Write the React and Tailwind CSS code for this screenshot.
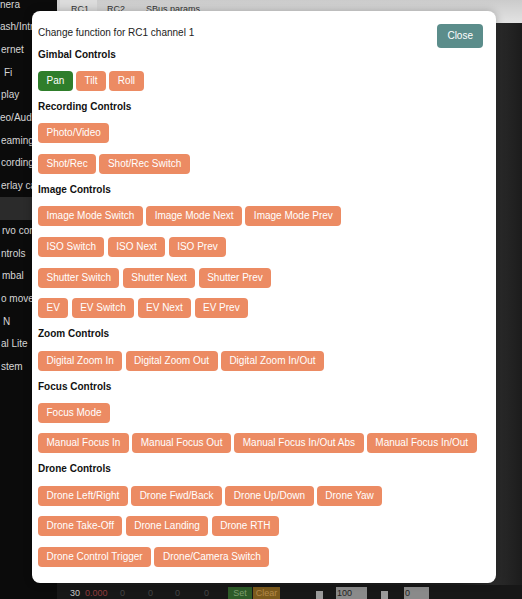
import React from "react";

const sideItems = [
  { label: "nera", pl: "pl-[0px]" },
  { label: "ash/Intro", pl: "pl-[0px]" },
  { label: "ernet", pl: "pl-[1px]" },
  { label: "Fi", pl: "pl-[4px]" },
  { label: "play", pl: "pl-[1px]" },
  { label: "eo/Audio", pl: "pl-[0px]" },
  { label: "eaming", pl: "pl-[1px]" },
  { label: "cording", pl: "pl-[1px]" },
  { label: "erlay ca", pl: "pl-[1px]" },
  { label: "", pl: "pl-[0px]", active: true },
  { label: "rvo contr", pl: "pl-[2px]" },
  { label: "ntrols", pl: "pl-[1px]" },
  { label: "mbal", pl: "pl-[2px]" },
  { label: "o mover", pl: "pl-[1px]" },
  { label: "N", pl: "pl-[3px]" },
  { label: "al Lite", pl: "pl-[1px]" },
  { label: "stem", pl: "pl-[1px]" },
];

// function groups shown in the modal, one inner array per row
const sections = [
  { title: "Gimbal Controls", groups: [["Pan", "Tilt", "Roll"]] },
  {
    title: "Recording Controls",
    groups: [["Photo/Video"], ["Shot/Rec", "Shot/Rec Switch"]],
  },
  {
    title: "Image Controls",
    groups: [
      ["Image Mode Switch", "Image Mode Next", "Image Mode Prev"],
      ["ISO Switch", "ISO Next", "ISO Prev"],
      ["Shutter Switch", "Shutter Next", "Shutter Prev"],
      ["EV", "EV Switch", "EV Next", "EV Prev"],
    ],
  },
  {
    title: "Zoom Controls",
    groups: [["Digital Zoom In", "Digital Zoom Out", "Digital Zoom In/Out"]],
  },
  {
    title: "Focus Controls",
    groups: [
      ["Focus Mode"],
      [
        "Manual Focus In",
        "Manual Focus Out",
        "Manual Focus In/Out Abs",
        "Manual Focus In/Out",
      ],
    ],
  },
  {
    title: "Drone Controls",
    groups: [
      ["Drone Left/Right", "Drone Fwd/Back", "Drone Up/Down", "Drone Yaw"],
      ["Drone Take-Off", "Drone Landing", "Drone RTH"],
      ["Drone Control Trigger", "Drone/Camera Switch"],
    ],
  },
];

const selected = "Pan";

function FnButton({ label }) {
  const active = label === selected;
  return (
    <button
      className={
        "h-[20px] px-[8.5px] rounded-[4px] text-[10px] leading-[20px] text-white whitespace-nowrap " +
        (active ? "bg-[#2f7e2b]" : "bg-[#ec8b63]")
      }
    >
      {label}
    </button>
  );
}

export default function App() {
  return (
    <div
      className="relative flex w-[522px] h-[599px] overflow-hidden bg-black"
      style={{ fontFamily: '"Liberation Sans", Arial, sans-serif' }}
    >
      {/* Sidebar */}
      <div className="w-[57px] shrink-0 bg-[#0b0b0b] overflow-hidden">
        <div className="mt-[-6.3px] flex flex-col">
          {sideItems.map((item, i) => (
            <div
              key={i}
              className={
                "h-[22.65px] leading-[22.65px] text-[10px] text-[#d6d6d6] whitespace-nowrap " +
                item.pl +
                (item.active ? " bg-[#2b2b2b]" : "")
              }
            >
              {item.label}
            </div>
          ))}
        </div>
      </div>

      {/* Main */}
      <div className="flex-1 flex flex-col bg-[linear-gradient(to_right,#1b1b1b_0%,#1d1d1d_86%,#2c2c2c_94%,#1c1c1c_100%)]">
        <div className="h-[23px] flex items-start bg-[linear-gradient(to_bottom,#cbcbcb,#e3e3e3)] text-[9px] text-[#333]">
          <div className="ml-[3px] w-[37px] h-[23px] bg-[#dcdcdc] pl-[11px] pt-[3px]">RC1</div>
          <div className="ml-[10px] pt-[3px]">RC2</div>
          <div className="ml-[21px] pt-[3px]">SBus params</div>
        </div>

        <div className="mt-auto h-[14px] flex items-start bg-[#171717] text-[9px] leading-[12px]">
          <div className="w-[13px]" />
          <div className="w-[15px] pt-[2px] text-[#c8c8c8]">30</div>
          <div className="w-[35px] pt-[2px] text-[#8f3b3b]">0.000</div>
          <div className="w-[28px] pt-[2px] text-[#444]">0</div>
          <div className="w-[27px] pt-[2px] text-[#444]">0</div>
          <div className="w-[29px] pt-[2px] text-[#444]">0</div>
          <div className="w-[24px] pt-[2px] text-[#444]">0</div>
          <div className="w-[24px] h-[14px] mt-[2px] bg-[#2e5b28] text-[#7d9e6f] text-center">Set</div>
          <div className="ml-[1px] w-[27px] h-[14px] mt-[2px] bg-[#7b5a1c] text-[#b3894a] text-center">Clear</div>
          <div className="ml-[36px] mt-[6px] w-[7px] h-[8px] bg-[#9a9a9a]" />
          <div className="ml-[13px] mt-[2px] w-[31px] h-[14px] bg-[#8a8a8a] text-[#222] pl-[1px]">100</div>
          <div className="ml-[14px] mt-[6px] w-[7px] h-[8px] bg-[#9a9a9a]" />
          <div className="ml-[16px] mt-[2px] w-[25px] h-[14px] bg-[#8a8a8a] text-[#222] pl-[1px]">0</div>
        </div>
      </div>

      {/* Modal */}
      <div className="absolute left-[32px] top-[11px] w-[464px] h-[572px] bg-white rounded-[8px] shadow-[0_0_8px_rgba(0,0,0,0.25)] pl-[6px] pr-[13px] pt-[13px]">
        <div className="flex justify-between items-start">
          <div className="mt-[2px] text-[10px] leading-[14px] text-[#222]">
            Change function for RC1 channel 1
          </div>
          <button className="h-[23.7px] px-[10px] rounded-[4px] bg-[#5b8d8b] text-white text-[10px]">
            Close
          </button>
        </div>

        {sections.map((section, si) => (
          <div key={section.title}>
            <div
              className={
                "h-[14px] leading-[14px] text-[10px] font-bold text-[#111] mb-[9.3px] " +
                (si === 0 ? "mt-0" : "mt-[9px]")
              }
            >
              {section.title}
            </div>
            <div className="flex flex-col gap-[10.67px]">
              {section.groups.map((group, gi) => (
                <div key={gi} className="flex gap-[3.3px]">
                  {group.map((label) => (
                    <FnButton key={label} label={label} />
                  ))}
                </div>
              ))}
            </div>
          </div>
        ))}
      </div>
    </div>
  );
}
